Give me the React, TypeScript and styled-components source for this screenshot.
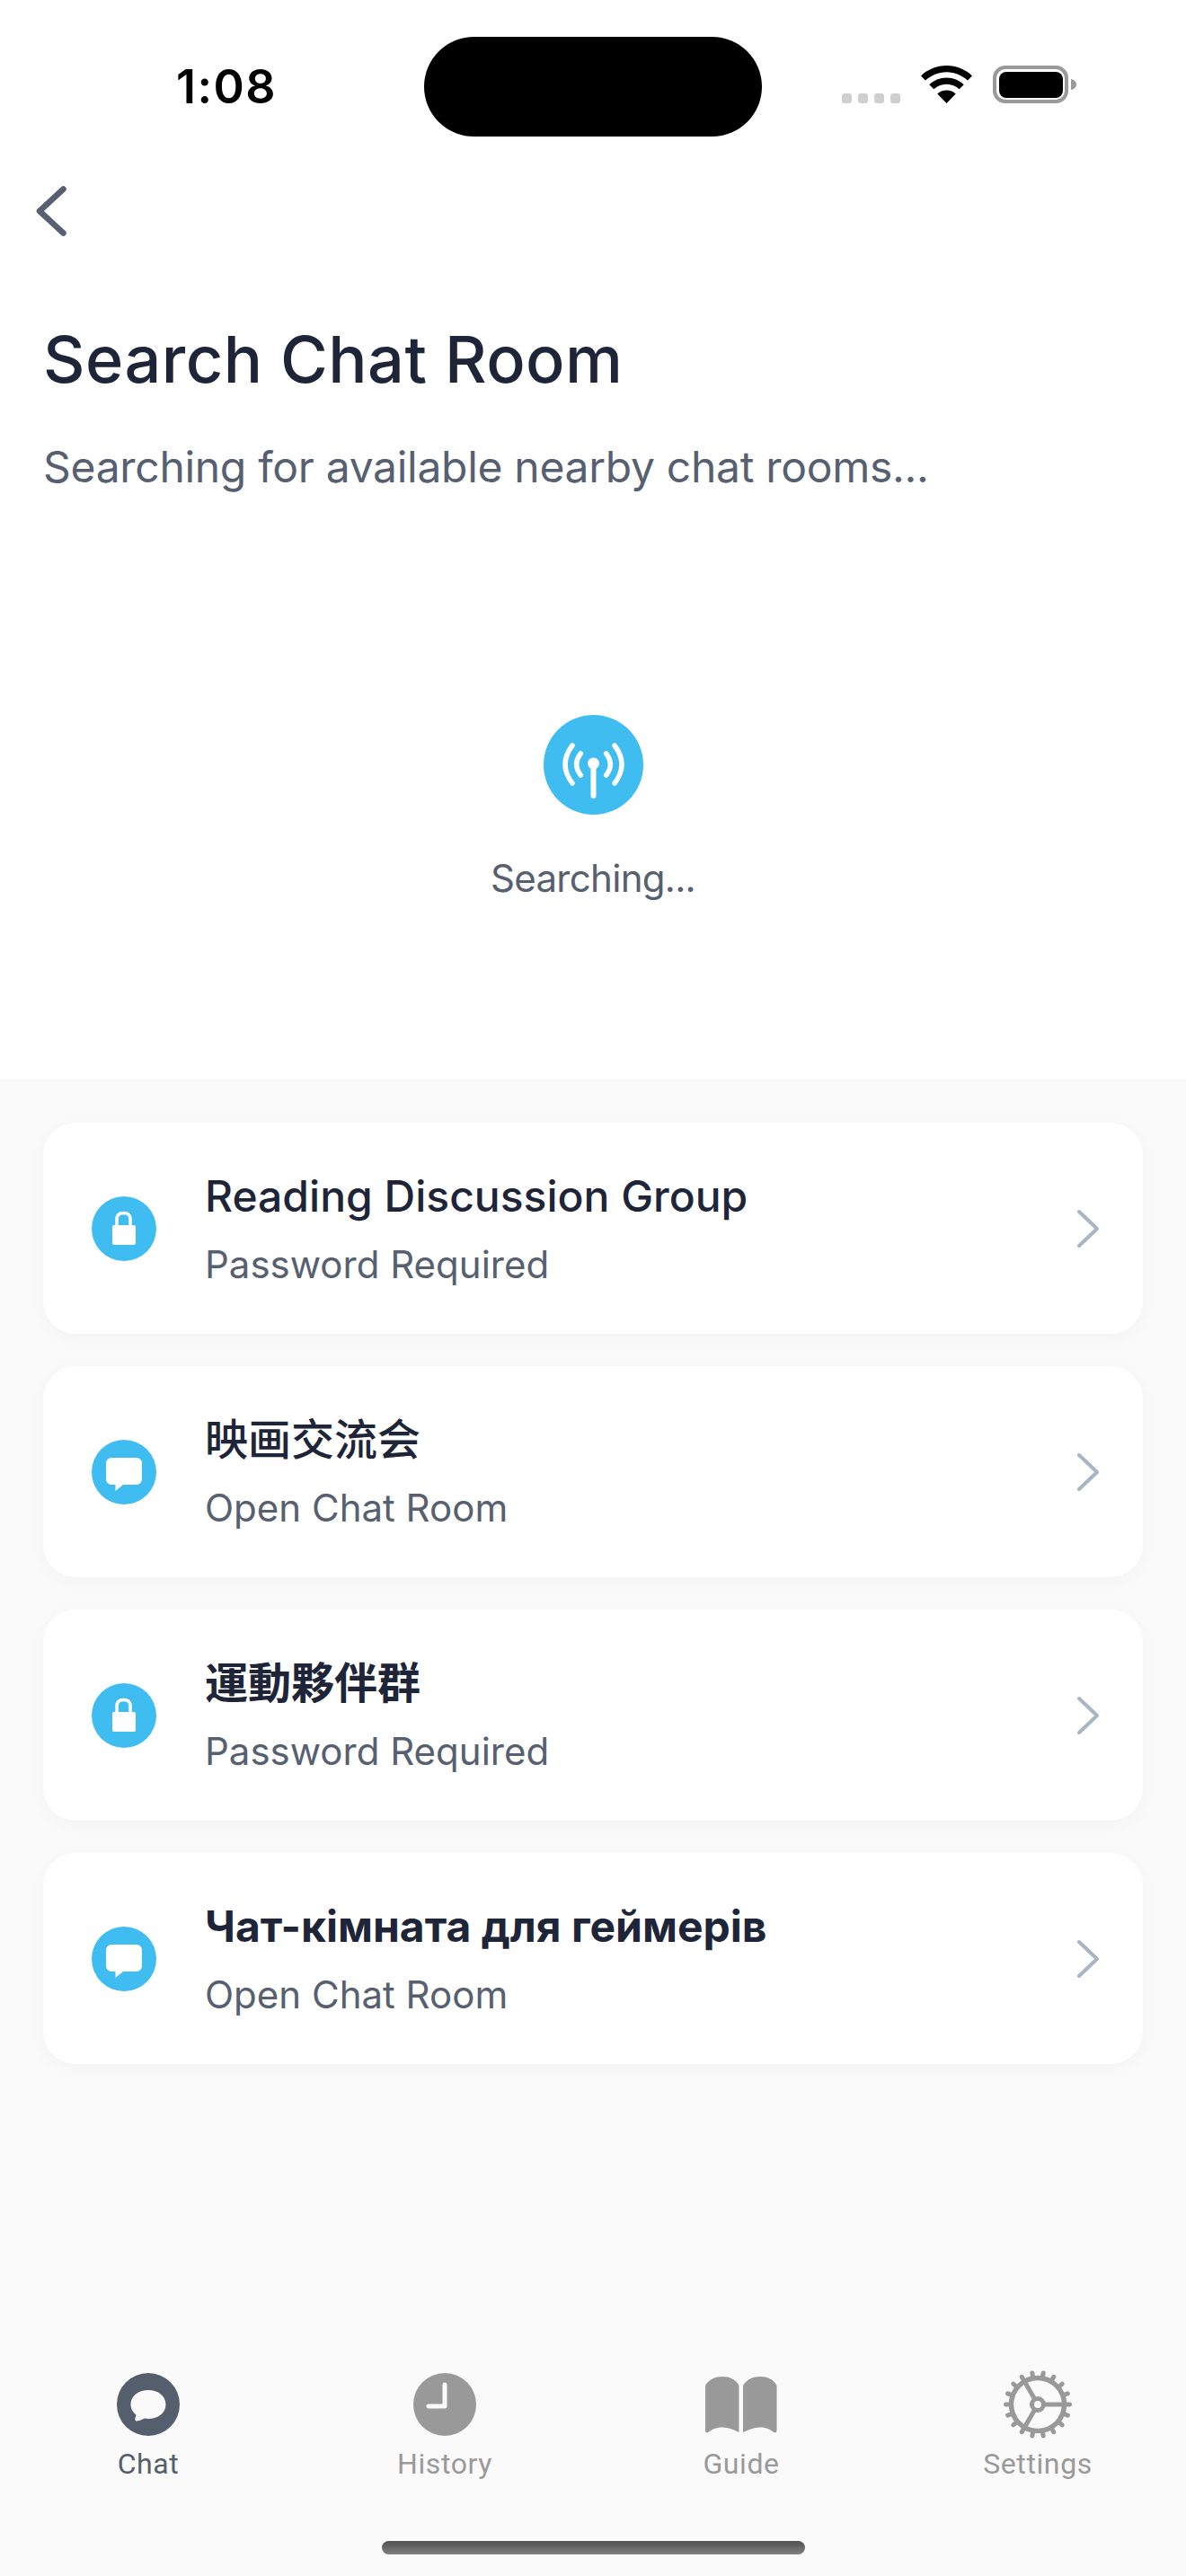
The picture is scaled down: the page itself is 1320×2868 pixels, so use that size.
import React, { FC } from "react";
import styled, { createGlobalStyle } from "styled-components";

const GlobalStyle = createGlobalStyle`
  html, body {
    margin: 0;
    padding: 0;
    background: #fafafa;
  }
  * {
    box-sizing: border-box;
  }
`;

const FONT = `Inter, "Noto Sans CJK SC", "Noto Sans CJK TC", sans-serif`;

const Page = styled.div`
  width: 1320px;
  height: 2868px;
  display: flex;
  flex-direction: column;
  background: #fafafa;
  font-family: ${FONT};
  overflow: hidden;
`;

const Header = styled.header`
  height: 1201px;
  background: #ffffff;
  display: flex;
  flex-direction: column;
`;

const StatusBar = styled.div`
  height: 193px;
  padding: 41px 122px 0 196px;
  display: flex;
  align-items: flex-start;
`;

const Time = styled.span`
  width: 276px;
  padding-top: 26px;
  font-size: 52px;
  line-height: 60px;
  letter-spacing: 1.5px;
  font-weight: 600;
  color: #000000;
`;

const Island = styled.div`
  width: 376px;
  height: 111px;
  border-radius: 56px;
  background: #000000;
`;

const StatusIcons = styled.div`
  margin-left: 89px;
  padding-top: 32px;
  display: flex;
  align-items: flex-end;
  gap: 23px;
`;

const Dots = styled.div`
  display: flex;
  gap: 7px;
`;

const Dot = styled.i`
  width: 11px;
  height: 11px;
  border-radius: 3px;
  background: #cfcfcf;
`;

const BackButton = styled.button`
  width: 34px;
  height: 56px;
  margin: 14px 0 0 40px;
  padding: 0;
  border: 0;
  background: none;
  display: block;
  line-height: 0;
`;

const Title = styled.h1`
  margin: 93px 0 0 48px;
  font-size: 72px;
  line-height: 88px;
  letter-spacing: 0.45px;
  font-weight: 500;
  color: #1f2539;
`;

const Subtitle = styled.p`
  margin: 47px 0 0 48px;
  font-size: 48px;
  line-height: 58px;
  letter-spacing: -0.3px;
  font-weight: 400;
  color: #576070;
`;

const Scanner = styled.div`
  margin-top: 247px;
  display: flex;
  flex-direction: column;
  align-items: center;
  gap: 46px;
`;

const ScanBadge = styled.div`
  width: 111px;
  height: 111px;
  line-height: 0;
`;

const ScanLabel = styled.span`
  font-size: 42px;
  line-height: 50px;
  letter-spacing: -0.7px;
  color: #576070;
`;

const RoomList = styled.main`
  flex: 1;
  padding: 49px 48px 0;
  display: flex;
  flex-direction: column;
  gap: 36px;
`;

const RoomCard = styled.div`
  height: 235px;
  padding: 0 48px 0 54px;
  display: flex;
  align-items: center;
  background: #ffffff;
  border-radius: 36px;
  box-shadow: 0 4px 18px rgba(0, 0, 0, 0.035);
`;

const RoomBadge = styled.div`
  width: 72px;
  height: 72px;
  flex: none;
  line-height: 0;
`;

const RoomText = styled.div`
  flex: 1;
  margin-left: 54px;
  display: flex;
  flex-direction: column;
  gap: 22px;
`;

const RoomName = styled.span<{ $weight: number }>`
  font-size: 48px;
  line-height: 58px;
  font-weight: ${(p) => p.$weight};
  color: #1f2539;
`;

const RoomKind = styled.span`
  font-size: 42px;
  line-height: 50px;
  color: #576070;
`;

const TabBar = styled.nav`
  display: grid;
  grid-template-columns: repeat(4, 330px);
`;

const Tab = styled.div<{ $active?: boolean }>`
  height: 125px;
  display: flex;
  flex-direction: column;
  align-items: center;
  justify-content: space-between;
  color: ${(p) => (p.$active ? "#555e6c" : "#999999")};
`;

const TabIcon = styled.div`
  height: 80px;
  display: flex;
  align-items: center;
  line-height: 0;
`;

const TabLabel = styled.span`
  font-family: Roboto, sans-serif;
  font-size: 32px;
  line-height: 38px;
  letter-spacing: 0.6px;
  font-weight: 400;
`;

const HomeBar = styled.div`
  width: 471px;
  height: 15px;
  margin: 67px auto 24px;
  border-radius: 8px;
  background: linear-gradient(#505050, #808080);
`;

const WifiIcon: FC = () => (
  <svg width="57" height="42" viewBox="0 0 57 42">
    <path
      d="M28.5 0C17.5 0 7.6 4.3 0 11.4l5 5.2C11.3 10.8 19.500 7.200 28.500 7.200S45.700 10.800 52 16.600l5-5.200C49.400 4.300 39.500 0 28.500 0Z"
      fill="#000"
    />
    <path
      d="M28.500 13.500C21 13.500 14.300 16.400 9.300 21.200l5 5.100C18 22.800 23 20.700 28.500 20.700S39 22.800 42.700 26.300l5-5.100C42.700 16.400 36 13.500 28.500 13.500Z"
      fill="#000"
    />
    <path
      d="M28.500 27.500C24.500 27.500 21 29 18.300 31.500L28.500 42 38.700 31.500C36 29 32.500 27.500 28.500 27.500Z"
      fill="#000"
    />
  </svg>
);

const BatteryIcon: FC = () => (
  <svg width="93" height="42" viewBox="0 0 93 42">
    <rect x="2" y="2" width="80" height="38" rx="12" fill="none" stroke="#999" strokeWidth="4" />
    <rect x="7" y="7" width="71" height="29" rx="8" fill="#000" />
    <path d="M87 15c3 .6 6 2.800 6 6s-3 5.400-6 6Z" fill="#999" />
  </svg>
);

const BackChevron: FC = () => (
  <svg width="34" height="56" viewBox="0 0 34 56">
    <path
      d="M30.500 3.500 4 28l26.500 24.500"
      fill="none"
      stroke="#576070"
      strokeWidth="6.500"
      strokeLinecap="round"
      strokeLinejoin="round"
    />
  </svg>
);

const AntennaBadge: FC = () => (
  <svg width="111" height="111" viewBox="0 0 111 111">
    <circle cx="55.500" cy="55.500" r="55.500" fill="#3fbdf1" />
    <g fill="none" stroke="#fff" strokeWidth="5.500" strokeLinecap="round">
      <path d="M32 34Q16 55 32 76" />
      <path d="M41.300 43Q32 55 41.300 67" />
      <path d="M79 34Q95 55 79 76" />
      <path d="M69.700 43Q79 55 69.700 67" />
      <path d="M55.500 54V90" strokeWidth="6" />
    </g>
    <circle cx="55.500" cy="54" r="6.500" fill="#fff" />
  </svg>
);

const LockBadge: FC = () => (
  <svg width="72" height="72" viewBox="0 0 72 72">
    <circle cx="36" cy="36" r="36" fill="#3fbdf1" />
    <path
      d="M28 33V25.500C28 20.500 31 18.500 35.500 18.500S43 20.500 43 25.500V33"
      fill="none"
      stroke="#fff"
      strokeWidth="3.500"
    />
    <rect x="23" y="32" width="26" height="22" rx="2" fill="#fff" />
  </svg>
);

const BubbleBadge: FC = () => (
  <svg width="72" height="72" viewBox="0 0 72 72">
    <circle cx="36" cy="36" r="36" fill="#3fbdf1" />
    <path
      d="M22 20H50A6 6 0 0 1 56 26V44A6 6 0 0 1 50 50H35L26.500 57V50H22A6 6 0 0 1 16 44V26A6 6 0 0 1 22 20Z"
      fill="#fff"
    />
  </svg>
);

const RowChevron: FC = () => (
  <svg width="26" height="44" viewBox="0 0 26 44">
    <path
      d="M3 3 23 22 3 41"
      fill="none"
      stroke="#a8b5c2"
      strokeWidth="4"
      strokeLinecap="round"
      strokeLinejoin="round"
    />
  </svg>
);

const ChatTabIcon: FC = () => (
  <svg width="70" height="70" viewBox="0 0 70 70">
    <circle cx="35" cy="35" r="35" fill="currentColor" />
    <path
      d="M35 19C24 19 15.500 25.500 15.500 35C15.500 40 18 44 21.500 46.500C21 49 19.500 51 21 53.500C25 53.500 28 52 31 50.500C32.300 50.800 33.700 51 35 51C46 51 54.500 44.500 54.500 35S46 19 35 19Z"
      fill="#fafafa"
    />
  </svg>
);

const HistoryTabIcon: FC = () => (
  <svg width="70" height="70" viewBox="0 0 70 70">
    <circle cx="35" cy="35" r="35" fill="currentColor" />
    <path
      d="M35 13V37H17"
      fill="none"
      stroke="#fafafa"
      strokeWidth="5"
      strokeLinecap="round"
      strokeLinejoin="round"
    />
  </svg>
);

const GuideTabIcon: FC = () => (
  <svg width="80" height="64" viewBox="0 0 80 64">
    <path
      d="M37.500 11C34 4 27 1 19 1S4 4 0 11V61C0 63.500 2.500 64 4 62.500C7 60 12 57.500 19 57.500S32 60 37.500 63Z"
      fill="currentColor"
    />
    <path
      d="M42 11C46 4 53 1 61 1S76 4 79.500 11V61C79.500 63.500 77 64 75.500 62.500C72.500 60 68 57.500 61 57.500S48 60 42 63Z"
      fill="currentColor"
    />
  </svg>
);

const GEAR_TEETH = Array.from({ length: 18 }, (_, i) => (i * 20 * Math.PI) / 180);

const SettingsTabIcon: FC = () => (
  <svg width="80" height="80" viewBox="-40 -40 80 80">
    <g fill="none" stroke="currentColor" strokeLinecap="round">
      {GEAR_TEETH.map((a) => (
        <line
          key={a}
          x1={Math.cos(a) * 31}
          y1={Math.sin(a) * 31}
          x2={Math.cos(a) * 35.5}
          y2={Math.sin(a) * 35.5}
          strokeWidth="5"
        />
      ))}
      <circle r="29.500" strokeWidth="5.500" />
      <circle r="6.500" strokeWidth="5" />
      <path d="M8 0H29M-4 -7-15 -26M-4 7-15 26" strokeWidth="5" strokeLinecap="butt" />
    </g>
  </svg>
);

const rooms = [
  { name: "Reading Discussion Group", kind: "Password Required", locked: true, weight: 500 },
  { name: "映画交流会", kind: "Open Chat Room", locked: false, weight: 500 },
  { name: "運動夥伴群", kind: "Password Required", locked: true, weight: 600 },
  { name: "Чат-кімната для геймерів", kind: "Open Chat Room", locked: false, weight: 700 },
];

const tabs = [
  { label: "Chat", icon: <ChatTabIcon />, active: true },
  { label: "History", icon: <HistoryTabIcon /> },
  { label: "Guide", icon: <GuideTabIcon /> },
  { label: "Settings", icon: <SettingsTabIcon /> },
];

const App: FC = () => (
  <Page>
    <GlobalStyle />
    <Header>
      <StatusBar>
        <Time>1:08</Time>
        <Island />
        <StatusIcons>
          <Dots>
            <Dot />
            <Dot />
            <Dot />
            <Dot />
          </Dots>
          <WifiIcon />
          <BatteryIcon />
        </StatusIcons>
      </StatusBar>
      <BackButton>
        <BackChevron />
      </BackButton>
      <Title>Search Chat Room</Title>
      <Subtitle>Searching for available nearby chat rooms...</Subtitle>
      <Scanner>
        <ScanBadge>
          <AntennaBadge />
        </ScanBadge>
        <ScanLabel>Searching...</ScanLabel>
      </Scanner>
    </Header>
    <RoomList>
      {rooms.map((room) => (
        <RoomCard key={room.name}>
          <RoomBadge>{room.locked ? <LockBadge /> : <BubbleBadge />}</RoomBadge>
          <RoomText>
            <RoomName $weight={room.weight}>{room.name}</RoomName>
            <RoomKind>{room.kind}</RoomKind>
          </RoomText>
          <RowChevron />
        </RoomCard>
      ))}
    </RoomList>
    <TabBar>
      {tabs.map((tab) => (
        <Tab key={tab.label} $active={tab.active}>
          <TabIcon>{tab.icon}</TabIcon>
          <TabLabel>{tab.label}</TabLabel>
        </Tab>
      ))}
    </TabBar>
    <HomeBar />
  </Page>
);

export default App;
